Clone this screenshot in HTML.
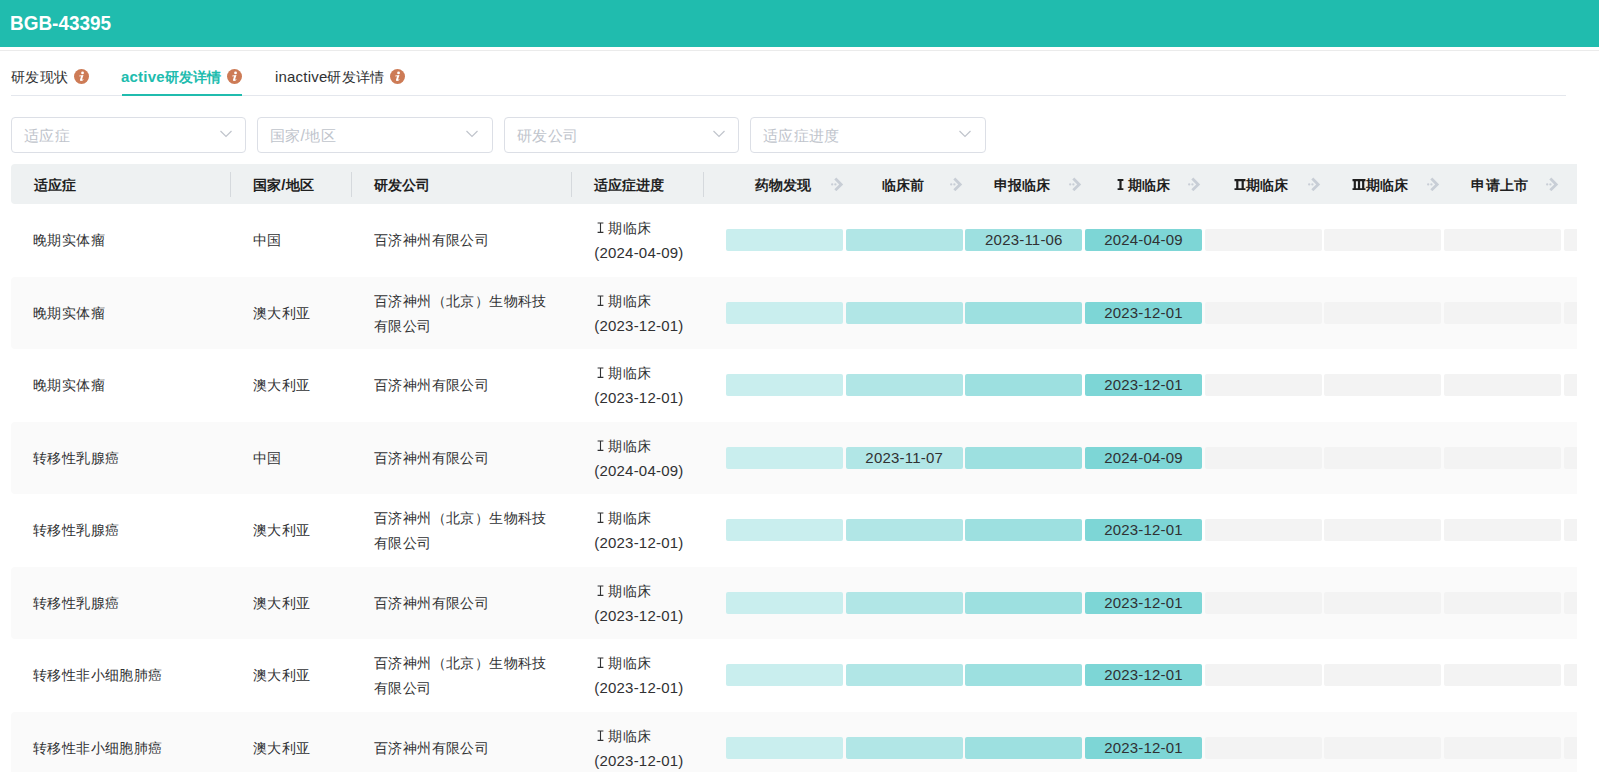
<!DOCTYPE html><html><head><meta charset="utf-8"><style>
*{box-sizing:border-box;margin:0;padding:0}
html,body{width:1599px;height:772px;overflow:hidden;background:#fff}
body{font-family:"Liberation Sans",sans-serif;color:#303133;position:relative;font-size:14px}
.l{font-size:15px;letter-spacing:0.2px}
.rn{vertical-align:baseline;position:relative;top:0px}
.hdr{position:absolute;left:0;top:0;width:1599px;height:47px;background:#20bcae}
.hdr .t{position:absolute;left:10.2px;top:11px;font-size:19.5px;font-weight:bold;color:#fff;line-height:24px;transform:scaleX(0.972);transform-origin:0 0}
.hline{position:absolute;left:0;top:50px;width:1599px;height:1px;background:#ebebeb}
.tabs{position:absolute;left:11px;top:95px;width:1555px;height:1px;background:#e4e7ed}
.tab{position:absolute;top:67px;line-height:20px;font-size:14px;color:#303133;white-space:nowrap;letter-spacing:0.3px}
.tab.act{color:#20bcae;font-weight:bold;letter-spacing:0.1px}
.ico{display:block;width:15px;height:15px;border-radius:50%;background:#cd7b56;position:absolute;top:69px}
.ico svg{position:absolute;left:0;top:0}
.uline{position:absolute;left:122px;top:94px;width:120px;height:2px;background:#20bcae}
.sel{position:absolute;top:117px;height:36px;border:1px solid #dcdfe6;border-radius:4px;background:#fff}
.sel .ph{position:absolute;left:12px;top:8px;font-size:15px;line-height:20px;color:#c0c4cc;letter-spacing:0.3px}
.sel .ph .l{font-size:16px}
.sel svg{position:absolute;top:12px}
.clip{position:absolute;left:0;top:0;width:1577px;height:772px;overflow:hidden}
.thead{position:absolute;left:11px;top:164px;width:1580px;height:40px;background:#eef1f2;border-radius:4px 0 0 4px}
.th{position:absolute;top:11px;font-weight:bold;font-size:14px;line-height:20px;color:#1f1f1f;white-space:nowrap;letter-spacing:0.1px}
.sep{position:absolute;top:8px;width:1px;height:25px;background:#d5d9dd}
.arr{position:absolute;top:13px;width:14px;height:14px}
.row{position:absolute;left:11px;width:1580px;height:72.5px;overflow:hidden}
.row.alt{background:#fafafa;border-radius:4px 0 0 4px}
.td{position:absolute;font-size:14px;line-height:25px;color:#303133;white-space:nowrap;letter-spacing:0.4px}
.bar{position:absolute;height:22px;border-radius:2px;background:#f3f3f3;text-align:center;line-height:21px;color:#303133}
</style></head><body><div class="hdr"><div class="t">BGB-43395</div></div><div class="hline"></div><div class="tabs"></div><div class="uline"></div><div class="tab" style="left:11px">研发现状</div><div class="tab act" style="left:121px"><span class="l">active</span>研发详情</div><div class="tab" style="left:275px"><span class="l">inactive</span>研发详情</div><span class="ico" style="left:74px"><svg width="15" height="15" viewBox="0 0 15 15"><circle cx="8.55" cy="3.9" r="1.4" fill="#fff"/><path d="M5.3 6.6 L9.5 6.1 L8.2 10.1 Q8.0 10.8 8.7 10.6 L9.8 10.2 Q9.2 11.9 7.1 11.9 Q5.7 11.9 6.0 10.7 L7.1 7.3 L5.4 7.4 Z" fill="#fff"/></svg></span><span class="ico" style="left:227px"><svg width="15" height="15" viewBox="0 0 15 15"><circle cx="8.55" cy="3.9" r="1.4" fill="#fff"/><path d="M5.3 6.6 L9.5 6.1 L8.2 10.1 Q8.0 10.8 8.7 10.6 L9.8 10.2 Q9.2 11.9 7.1 11.9 Q5.7 11.9 6.0 10.7 L7.1 7.3 L5.4 7.4 Z" fill="#fff"/></svg></span><span class="ico" style="left:390px"><svg width="15" height="15" viewBox="0 0 15 15"><circle cx="8.55" cy="3.9" r="1.4" fill="#fff"/><path d="M5.3 6.6 L9.5 6.1 L8.2 10.1 Q8.0 10.8 8.7 10.6 L9.8 10.2 Q9.2 11.9 7.1 11.9 Q5.7 11.9 6.0 10.7 L7.1 7.3 L5.4 7.4 Z" fill="#fff"/></svg></span><div class="sel" style="left:11px;width:235px"><div class="ph">适应症</div><svg style="left:208px" width="12" height="8" viewBox="0 0 12 8"><path d="M0.5 1 L6 6.5 L11.5 1" fill="none" stroke="#c0c4cc" stroke-width="1.2"/></svg></div><div class="sel" style="left:257px;width:236px"><div class="ph">国家<span class="l">/</span>地区</div><svg style="left:208px" width="12" height="8" viewBox="0 0 12 8"><path d="M0.5 1 L6 6.5 L11.5 1" fill="none" stroke="#c0c4cc" stroke-width="1.2"/></svg></div><div class="sel" style="left:504px;width:235px"><div class="ph">研发公司</div><svg style="left:208px" width="12" height="8" viewBox="0 0 12 8"><path d="M0.5 1 L6 6.5 L11.5 1" fill="none" stroke="#c0c4cc" stroke-width="1.2"/></svg></div><div class="sel" style="left:750px;width:236px"><div class="ph">适应症进度</div><svg style="left:208px" width="12" height="8" viewBox="0 0 12 8"><path d="M0.5 1 L6 6.5 L11.5 1" fill="none" stroke="#c0c4cc" stroke-width="1.2"/></svg></div><div class="clip"><div class="thead"><div class="th" style="left:23px">适应症</div><div class="th" style="left:242px">国家<span class="l">/</span>地区</div><div class="th" style="left:363px">研发公司</div><div class="th" style="left:583px">适应症进度</div><div class="sep" style="left:219px"></div><div class="sep" style="left:340px"></div><div class="sep" style="left:560px"></div><div class="sep" style="left:692px"></div><div class="th" style="left:692.00px;width:160px;text-align:center">药物发现</div><div class="arr" style="left:818.50px"><svg width="14" height="14" viewBox="0 0 14 14"><circle cx="2.2" cy="7.4" r="1.15" fill="#c8ced6"/><circle cx="5.4" cy="7.4" r="1.15" fill="#c8ced6"/><path d="M5.3 1.6 L11.2 7.4 L5.3 13.2" fill="none" stroke="#c8ced6" stroke-width="2.8"/></svg></div><div class="th" style="left:811.75px;width:160px;text-align:center">临床前</div><div class="arr" style="left:937.83px"><svg width="14" height="14" viewBox="0 0 14 14"><circle cx="2.2" cy="7.4" r="1.15" fill="#c8ced6"/><circle cx="5.4" cy="7.4" r="1.15" fill="#c8ced6"/><path d="M5.3 1.6 L11.2 7.4 L5.3 13.2" fill="none" stroke="#c8ced6" stroke-width="2.8"/></svg></div><div class="th" style="left:931.00px;width:160px;text-align:center">申报临床</div><div class="arr" style="left:1057.16px"><svg width="14" height="14" viewBox="0 0 14 14"><circle cx="2.2" cy="7.4" r="1.15" fill="#c8ced6"/><circle cx="5.4" cy="7.4" r="1.15" fill="#c8ced6"/><path d="M5.3 1.6 L11.2 7.4 L5.3 13.2" fill="none" stroke="#c8ced6" stroke-width="2.8"/></svg></div><div class="th" style="left:1052.50px;width:160px;text-align:center"><svg class="rn" width="7" height="11" viewBox="0 0 7 11"><path d="M0.6 1.0H6.4M0.6 10.4H6.4M3.5 1.0V10.4" stroke="#1f1f1f" stroke-width="2.2" fill="none"/></svg>&nbsp;期临床</div><div class="arr" style="left:1176.49px"><svg width="14" height="14" viewBox="0 0 14 14"><circle cx="2.2" cy="7.4" r="1.15" fill="#c8ced6"/><circle cx="5.4" cy="7.4" r="1.15" fill="#c8ced6"/><path d="M5.3 1.6 L11.2 7.4 L5.3 13.2" fill="none" stroke="#c8ced6" stroke-width="2.8"/></svg></div><div class="th" style="left:1170.30px;width:160px;text-align:center"><svg class="rn" width="12" height="11" viewBox="0 0 12 11"><path d="M0.5 1.2H11.5M0.5 10.3H11.5M3.3 1.2V10.3M8.7 1.2V10.3" stroke="#1f1f1f" stroke-width="2.2" fill="none"/></svg>期临床</div><div class="arr" style="left:1295.82px"><svg width="14" height="14" viewBox="0 0 14 14"><circle cx="2.2" cy="7.4" r="1.15" fill="#c8ced6"/><circle cx="5.4" cy="7.4" r="1.15" fill="#c8ced6"/><path d="M5.3 1.6 L11.2 7.4 L5.3 13.2" fill="none" stroke="#c8ced6" stroke-width="2.8"/></svg></div><div class="th" style="left:1289.00px;width:160px;text-align:center"><svg class="rn" width="14" height="11" viewBox="0 0 14 11"><path d="M0.5 1.2H13.5M0.5 10.3H13.5M2.8 1.2V10.3M7 1.2V10.3M11.2 1.2V10.3" stroke="#1f1f1f" stroke-width="2.2" fill="none"/></svg>期临床</div><div class="arr" style="left:1415.15px"><svg width="14" height="14" viewBox="0 0 14 14"><circle cx="2.2" cy="7.4" r="1.15" fill="#c8ced6"/><circle cx="5.4" cy="7.4" r="1.15" fill="#c8ced6"/><path d="M5.3 1.6 L11.2 7.4 L5.3 13.2" fill="none" stroke="#c8ced6" stroke-width="2.8"/></svg></div><div class="th" style="left:1408.70px;width:160px;text-align:center">申请上市</div><div class="arr" style="left:1534.48px"><svg width="14" height="14" viewBox="0 0 14 14"><circle cx="2.2" cy="7.4" r="1.15" fill="#c8ced6"/><circle cx="5.4" cy="7.4" r="1.15" fill="#c8ced6"/><path d="M5.3 1.6 L11.2 7.4 L5.3 13.2" fill="none" stroke="#c8ced6" stroke-width="2.8"/></svg></div><div class="th" style="left:1528.00px;width:160px;text-align:center">批准上市</div><div class="arr" style="left:1653.81px"><svg width="14" height="14" viewBox="0 0 14 14"><circle cx="2.2" cy="7.4" r="1.15" fill="#c8ced6"/><circle cx="5.4" cy="7.4" r="1.15" fill="#c8ced6"/><path d="M5.3 1.6 L11.2 7.4 L5.3 13.2" fill="none" stroke="#c8ced6" stroke-width="2.8"/></svg></div></div><div class="row" style="top:204.0px"><div class="td" style="left:22px;top:24px">晚期实体瘤</div><div class="td" style="left:242px;top:24px">中国</div><div class="td" style="left:363px;top:24px">百济神州有限公司</div><div class="td" style="left:583.3px;top:12px"><span style="padding-left:2.7px"></span><svg class="rn" width="7" height="11" viewBox="0 0 7 11"><path d="M0.6 1.0H6.4M0.6 10.4H6.4M3.5 1.0V10.4" stroke="#303133" stroke-width="1.1" fill="none"/></svg>&nbsp;期临床<br><span style="position:relative;top:-1px"><span class="l">(2024-04-09)</span></span></div><div class="bar" style="left:715.00px;top:25px;width:117px;background:#c9eeee"></div><div class="bar" style="left:834.68px;top:25px;width:117px;background:#b1e6e6"></div><div class="bar" style="left:954.36px;top:25px;width:117px;background:#9de0e0"><span class="l">2023-11-06</span></div><div class="bar" style="left:1074.04px;top:25px;width:117px;background:#7dd6d6"><span class="l">2024-04-09</span></div><div class="bar" style="left:1193.72px;top:25px;width:117px;background:#f3f3f3"></div><div class="bar" style="left:1313.40px;top:25px;width:117px;background:#f3f3f3"></div><div class="bar" style="left:1433.08px;top:25px;width:117px;background:#f3f3f3"></div><div class="bar" style="left:1552.76px;top:25px;width:117px;background:#f3f3f3"></div></div><div class="row alt" style="top:276.5px"><div class="td" style="left:22px;top:24px">晚期实体瘤</div><div class="td" style="left:242px;top:24px">澳大利亚</div><div class="td" style="left:363px;top:12px">百济神州（北京）生物科技<br>有限公司</div><div class="td" style="left:583.3px;top:12px"><span style="padding-left:2.7px"></span><svg class="rn" width="7" height="11" viewBox="0 0 7 11"><path d="M0.6 1.0H6.4M0.6 10.4H6.4M3.5 1.0V10.4" stroke="#303133" stroke-width="1.1" fill="none"/></svg>&nbsp;期临床<br><span style="position:relative;top:-1px"><span class="l">(2023-12-01)</span></span></div><div class="bar" style="left:715.00px;top:25px;width:117px;background:#c9eeee"></div><div class="bar" style="left:834.68px;top:25px;width:117px;background:#b1e6e6"></div><div class="bar" style="left:954.36px;top:25px;width:117px;background:#9de0e0"></div><div class="bar" style="left:1074.04px;top:25px;width:117px;background:#7dd6d6"><span class="l">2023-12-01</span></div><div class="bar" style="left:1193.72px;top:25px;width:117px;background:#f3f3f3"></div><div class="bar" style="left:1313.40px;top:25px;width:117px;background:#f3f3f3"></div><div class="bar" style="left:1433.08px;top:25px;width:117px;background:#f3f3f3"></div><div class="bar" style="left:1552.76px;top:25px;width:117px;background:#f3f3f3"></div></div><div class="row" style="top:349.0px"><div class="td" style="left:22px;top:24px">晚期实体瘤</div><div class="td" style="left:242px;top:24px">澳大利亚</div><div class="td" style="left:363px;top:24px">百济神州有限公司</div><div class="td" style="left:583.3px;top:12px"><span style="padding-left:2.7px"></span><svg class="rn" width="7" height="11" viewBox="0 0 7 11"><path d="M0.6 1.0H6.4M0.6 10.4H6.4M3.5 1.0V10.4" stroke="#303133" stroke-width="1.1" fill="none"/></svg>&nbsp;期临床<br><span style="position:relative;top:-1px"><span class="l">(2023-12-01)</span></span></div><div class="bar" style="left:715.00px;top:25px;width:117px;background:#c9eeee"></div><div class="bar" style="left:834.68px;top:25px;width:117px;background:#b1e6e6"></div><div class="bar" style="left:954.36px;top:25px;width:117px;background:#9de0e0"></div><div class="bar" style="left:1074.04px;top:25px;width:117px;background:#7dd6d6"><span class="l">2023-12-01</span></div><div class="bar" style="left:1193.72px;top:25px;width:117px;background:#f3f3f3"></div><div class="bar" style="left:1313.40px;top:25px;width:117px;background:#f3f3f3"></div><div class="bar" style="left:1433.08px;top:25px;width:117px;background:#f3f3f3"></div><div class="bar" style="left:1552.76px;top:25px;width:117px;background:#f3f3f3"></div></div><div class="row alt" style="top:421.5px"><div class="td" style="left:22px;top:24px">转移性乳腺癌</div><div class="td" style="left:242px;top:24px">中国</div><div class="td" style="left:363px;top:24px">百济神州有限公司</div><div class="td" style="left:583.3px;top:12px"><span style="padding-left:2.7px"></span><svg class="rn" width="7" height="11" viewBox="0 0 7 11"><path d="M0.6 1.0H6.4M0.6 10.4H6.4M3.5 1.0V10.4" stroke="#303133" stroke-width="1.1" fill="none"/></svg>&nbsp;期临床<br><span style="position:relative;top:-1px"><span class="l">(2024-04-09)</span></span></div><div class="bar" style="left:715.00px;top:25px;width:117px;background:#c9eeee"></div><div class="bar" style="left:834.68px;top:25px;width:117px;background:#b1e6e6"><span class="l">2023-11-07</span></div><div class="bar" style="left:954.36px;top:25px;width:117px;background:#9de0e0"></div><div class="bar" style="left:1074.04px;top:25px;width:117px;background:#7dd6d6"><span class="l">2024-04-09</span></div><div class="bar" style="left:1193.72px;top:25px;width:117px;background:#f3f3f3"></div><div class="bar" style="left:1313.40px;top:25px;width:117px;background:#f3f3f3"></div><div class="bar" style="left:1433.08px;top:25px;width:117px;background:#f3f3f3"></div><div class="bar" style="left:1552.76px;top:25px;width:117px;background:#f3f3f3"></div></div><div class="row" style="top:494.0px"><div class="td" style="left:22px;top:24px">转移性乳腺癌</div><div class="td" style="left:242px;top:24px">澳大利亚</div><div class="td" style="left:363px;top:12px">百济神州（北京）生物科技<br>有限公司</div><div class="td" style="left:583.3px;top:12px"><span style="padding-left:2.7px"></span><svg class="rn" width="7" height="11" viewBox="0 0 7 11"><path d="M0.6 1.0H6.4M0.6 10.4H6.4M3.5 1.0V10.4" stroke="#303133" stroke-width="1.1" fill="none"/></svg>&nbsp;期临床<br><span style="position:relative;top:-1px"><span class="l">(2023-12-01)</span></span></div><div class="bar" style="left:715.00px;top:25px;width:117px;background:#c9eeee"></div><div class="bar" style="left:834.68px;top:25px;width:117px;background:#b1e6e6"></div><div class="bar" style="left:954.36px;top:25px;width:117px;background:#9de0e0"></div><div class="bar" style="left:1074.04px;top:25px;width:117px;background:#7dd6d6"><span class="l">2023-12-01</span></div><div class="bar" style="left:1193.72px;top:25px;width:117px;background:#f3f3f3"></div><div class="bar" style="left:1313.40px;top:25px;width:117px;background:#f3f3f3"></div><div class="bar" style="left:1433.08px;top:25px;width:117px;background:#f3f3f3"></div><div class="bar" style="left:1552.76px;top:25px;width:117px;background:#f3f3f3"></div></div><div class="row alt" style="top:566.5px"><div class="td" style="left:22px;top:24px">转移性乳腺癌</div><div class="td" style="left:242px;top:24px">澳大利亚</div><div class="td" style="left:363px;top:24px">百济神州有限公司</div><div class="td" style="left:583.3px;top:12px"><span style="padding-left:2.7px"></span><svg class="rn" width="7" height="11" viewBox="0 0 7 11"><path d="M0.6 1.0H6.4M0.6 10.4H6.4M3.5 1.0V10.4" stroke="#303133" stroke-width="1.1" fill="none"/></svg>&nbsp;期临床<br><span style="position:relative;top:-1px"><span class="l">(2023-12-01)</span></span></div><div class="bar" style="left:715.00px;top:25px;width:117px;background:#c9eeee"></div><div class="bar" style="left:834.68px;top:25px;width:117px;background:#b1e6e6"></div><div class="bar" style="left:954.36px;top:25px;width:117px;background:#9de0e0"></div><div class="bar" style="left:1074.04px;top:25px;width:117px;background:#7dd6d6"><span class="l">2023-12-01</span></div><div class="bar" style="left:1193.72px;top:25px;width:117px;background:#f3f3f3"></div><div class="bar" style="left:1313.40px;top:25px;width:117px;background:#f3f3f3"></div><div class="bar" style="left:1433.08px;top:25px;width:117px;background:#f3f3f3"></div><div class="bar" style="left:1552.76px;top:25px;width:117px;background:#f3f3f3"></div></div><div class="row" style="top:639.0px"><div class="td" style="left:22px;top:24px">转移性非小细胞肺癌</div><div class="td" style="left:242px;top:24px">澳大利亚</div><div class="td" style="left:363px;top:12px">百济神州（北京）生物科技<br>有限公司</div><div class="td" style="left:583.3px;top:12px"><span style="padding-left:2.7px"></span><svg class="rn" width="7" height="11" viewBox="0 0 7 11"><path d="M0.6 1.0H6.4M0.6 10.4H6.4M3.5 1.0V10.4" stroke="#303133" stroke-width="1.1" fill="none"/></svg>&nbsp;期临床<br><span style="position:relative;top:-1px"><span class="l">(2023-12-01)</span></span></div><div class="bar" style="left:715.00px;top:25px;width:117px;background:#c9eeee"></div><div class="bar" style="left:834.68px;top:25px;width:117px;background:#b1e6e6"></div><div class="bar" style="left:954.36px;top:25px;width:117px;background:#9de0e0"></div><div class="bar" style="left:1074.04px;top:25px;width:117px;background:#7dd6d6"><span class="l">2023-12-01</span></div><div class="bar" style="left:1193.72px;top:25px;width:117px;background:#f3f3f3"></div><div class="bar" style="left:1313.40px;top:25px;width:117px;background:#f3f3f3"></div><div class="bar" style="left:1433.08px;top:25px;width:117px;background:#f3f3f3"></div><div class="bar" style="left:1552.76px;top:25px;width:117px;background:#f3f3f3"></div></div><div class="row alt" style="top:711.5px"><div class="td" style="left:22px;top:24px">转移性非小细胞肺癌</div><div class="td" style="left:242px;top:24px">澳大利亚</div><div class="td" style="left:363px;top:24px">百济神州有限公司</div><div class="td" style="left:583.3px;top:12px"><span style="padding-left:2.7px"></span><svg class="rn" width="7" height="11" viewBox="0 0 7 11"><path d="M0.6 1.0H6.4M0.6 10.4H6.4M3.5 1.0V10.4" stroke="#303133" stroke-width="1.1" fill="none"/></svg>&nbsp;期临床<br><span style="position:relative;top:-1px"><span class="l">(2023-12-01)</span></span></div><div class="bar" style="left:715.00px;top:25px;width:117px;background:#c9eeee"></div><div class="bar" style="left:834.68px;top:25px;width:117px;background:#b1e6e6"></div><div class="bar" style="left:954.36px;top:25px;width:117px;background:#9de0e0"></div><div class="bar" style="left:1074.04px;top:25px;width:117px;background:#7dd6d6"><span class="l">2023-12-01</span></div><div class="bar" style="left:1193.72px;top:25px;width:117px;background:#f3f3f3"></div><div class="bar" style="left:1313.40px;top:25px;width:117px;background:#f3f3f3"></div><div class="bar" style="left:1433.08px;top:25px;width:117px;background:#f3f3f3"></div><div class="bar" style="left:1552.76px;top:25px;width:117px;background:#f3f3f3"></div></div></div></body></html>
